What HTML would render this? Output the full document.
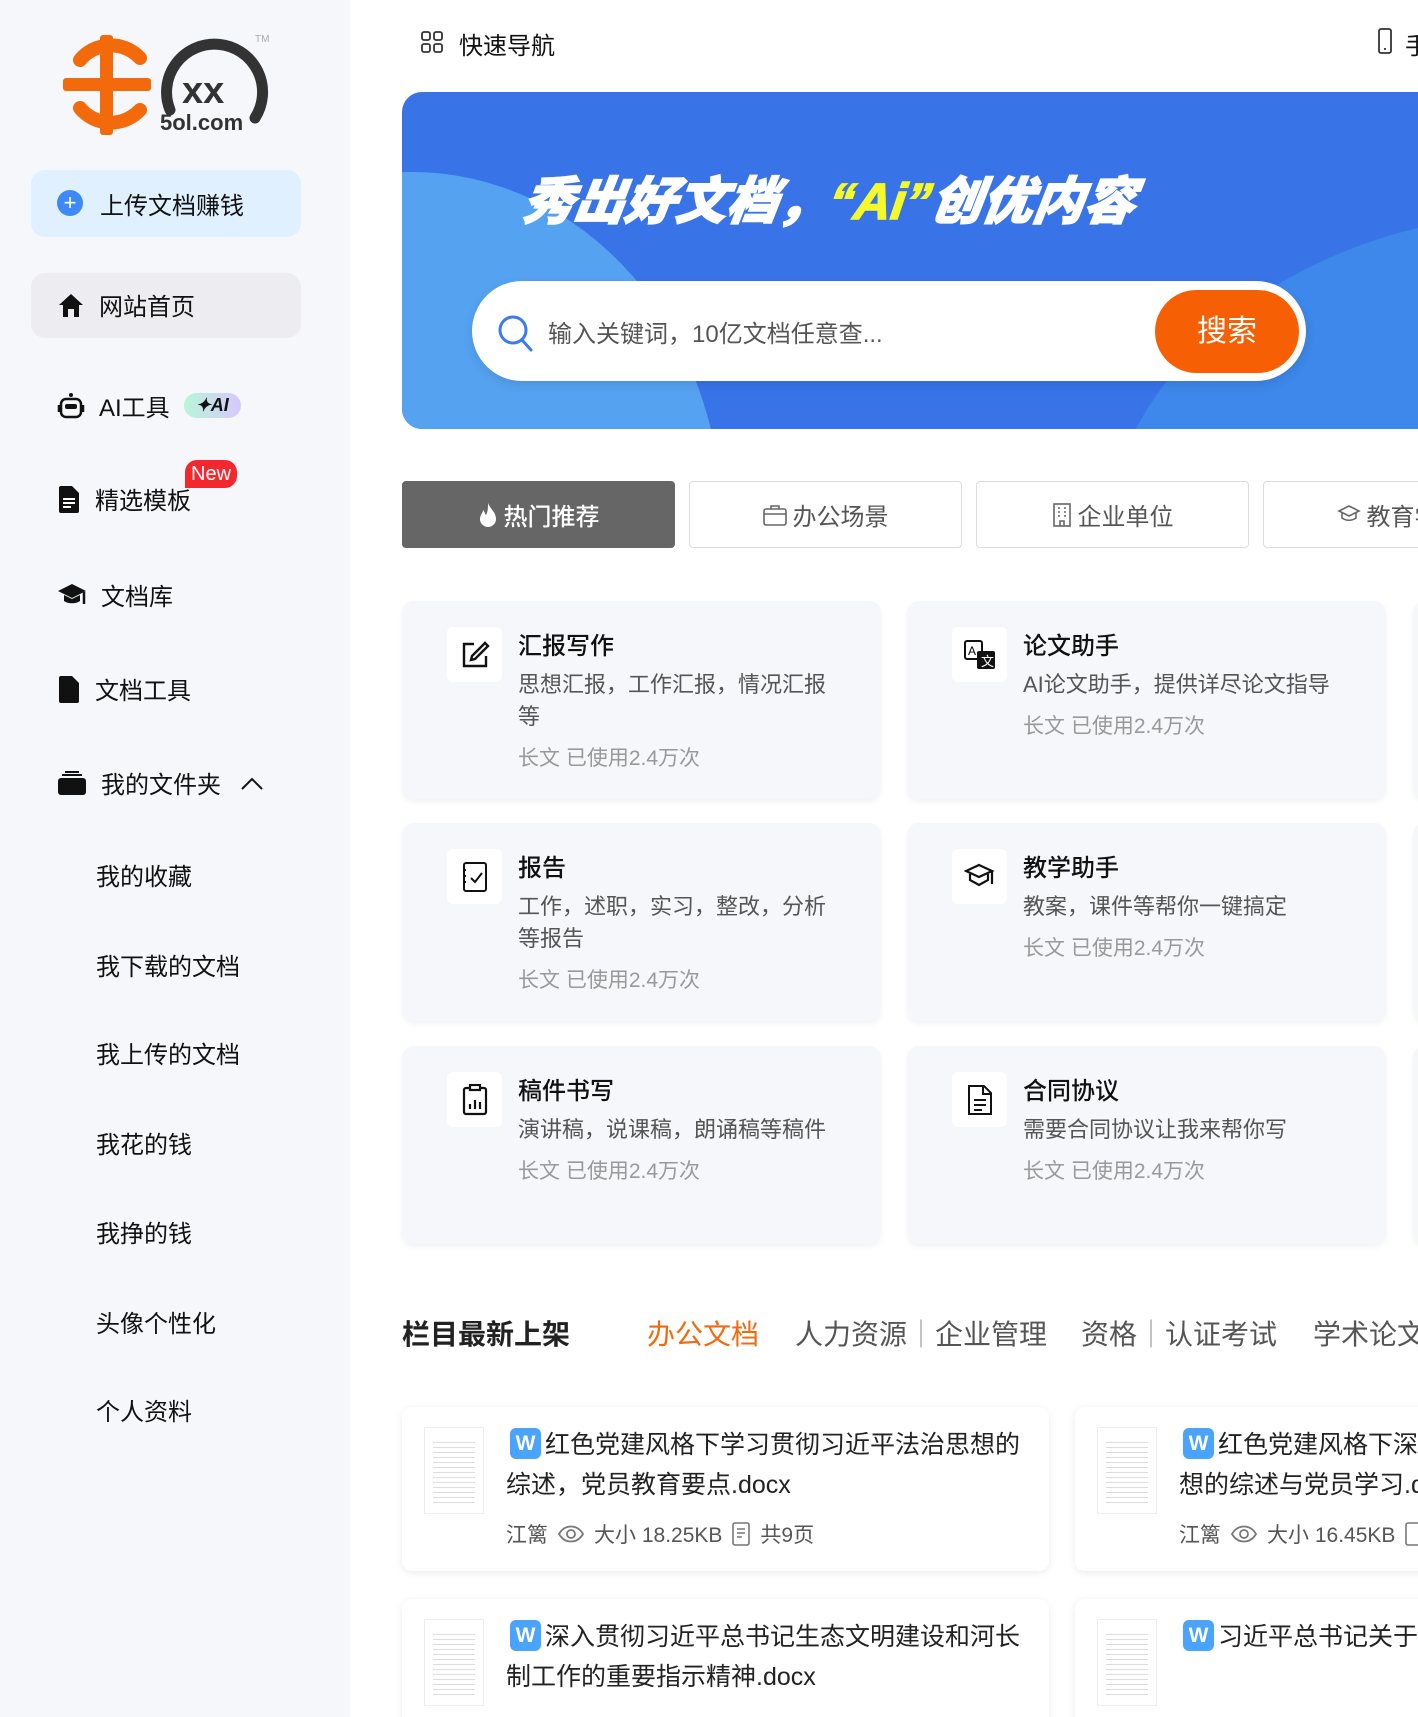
<!DOCTYPE html>
<html><head><meta charset="utf-8">
<style>
*{margin:0;padding:0;box-sizing:border-box}
html{overflow:hidden}
body{width:1418px;height:1717px;overflow:hidden;background:#fff;font-family:"Liberation Sans","Noto Sans CJK SC",sans-serif;color:#111;position:relative}
.a{position:absolute}
#side{left:0;top:0;width:350px;height:1717px;background:#f6f7fb}
.nav{position:absolute;left:57px;font-size:24px;display:flex;align-items:center;gap:14px;color:#111}
.sub{position:absolute;left:96px;font-size:24px;color:#111}
.tab{position:absolute;top:481px;height:67px;width:273px;border:1px solid #ddd;border-radius:4px;display:flex;align-items:center;justify-content:center;font-size:24px;color:#555;gap:6px;background:#fff}
.card{position:absolute;width:479px;height:198px;background:#f6f7fb;border-radius:12px;box-shadow:0 3px 6px rgba(0,0,0,.05)}
.card .ic{position:absolute;left:45px;top:26px;width:55px;height:55px;background:#fff;border-radius:6px;display:flex;align-items:center;justify-content:center}
.card h3{position:absolute;left:116px;top:25px;font-size:24px;font-weight:500;color:#111}
.card p{position:absolute;left:116px;top:68px;width:325px;font-size:22px;line-height:32px;color:#555}
.card .m{position:absolute;left:116px;font-size:21px;color:#999}
.doc{position:absolute;width:647px;height:164px;background:#fff;border-radius:10px;box-shadow:0 2px 8px rgba(0,0,0,.08)}
.doc .th{position:absolute;left:22px;top:20px;width:60px;height:87px;border:1px solid #eee;background:repeating-linear-gradient(#fff 0 4px,#ddd 4px 5px);background-clip:content-box;padding:10px 8px}
.doc .t{position:absolute;left:104px;top:18px;width:525px;font-size:25px;line-height:40px;color:#222}
.w{display:inline-block;width:31px;height:31px;background:#4aa3ff;border-radius:6px;color:#fff;font-size:21px;font-weight:bold;text-align:center;line-height:31px;vertical-align:3px;margin:0 4px 0 4px}
.doc .mm{position:absolute;left:104px;top:112px;font-size:21px;color:#555;display:flex;gap:10px;align-items:center}
</style></head><body>
<div id="side" class="a"></div>
<svg class="a" style="left:60px;top:30px" width="220" height="110" viewBox="0 0 220 110">
<path d="M20 30 A40 40 0 0 1 80 28" stroke="#f26a0c" stroke-width="14" fill="none" stroke-linecap="round"/>
<path d="M20 78 A40 40 0 0 0 80 80" stroke="#f26a0c" stroke-width="14" fill="none" stroke-linecap="round"/>
<rect x="3" y="48" width="88" height="13" rx="3" fill="#f26a0c"/>
<rect x="40" y="5" width="13" height="100" rx="3" fill="#f26a0c"/>
<path d="M110 80 A48 48 0 1 1 195 88" stroke="#333" stroke-width="11" fill="none" stroke-linecap="round"/>
<text x="122" y="73" font-size="38" font-weight="bold" fill="#333" font-family="Liberation Sans">xx</text>
<text x="100" y="100" font-size="22" font-weight="bold" fill="#333" font-family="Liberation Sans">5ol.com</text>
<text x="195" y="12" font-size="10" fill="#aaa" font-family="Liberation Sans">TM</text>
</svg>
<div class="a" style="left:31px;top:170px;width:270px;height:67px;background:#e0f0ff;border-radius:14px"></div>
<div class="a" style="left:57px;top:190px;width:26px;height:26px;border-radius:50%;background:#3d8af7;color:#fff;text-align:center;line-height:25px;font-size:22px">+</div>
<div class="a" style="left:100px;top:186px;font-size:24px">上传文档赚钱</div>
<div class="a" style="left:31px;top:273px;width:270px;height:65px;background:#edecf1;border-radius:14px"></div>
<div class="nav" style="top:287px"><svg width="28" height="26" viewBox="0 0 28 26"><path d="M14 2 L26 13 H22 V25 H17 V17 H11 V25 H6 V13 H2 Z" fill="#111"/></svg><span>网站首页</span></div>
<div class="nav" style="top:388px"><svg width="28" height="28" viewBox="0 0 28 28"><circle cx="14" cy="3" r="2" fill="#111"/><rect x="4" y="7" width="20" height="18" rx="5" fill="none" stroke="#111" stroke-width="2.5"/><rect x="8" y="12" width="12" height="5" rx="2" fill="#111"/><path d="M2 13v7M26 13v7" stroke="#111" stroke-width="2.5"/></svg><span>AI工具</span><span style="background:linear-gradient(90deg,#b8f5d8,#d7c8ff);border-radius:14px;font-size:18px;font-style:italic;font-weight:bold;padding:2px 12px">✦AI</span></div>
<div class="nav" style="top:481px"><svg width="24" height="28" viewBox="0 0 24 28"><path d="M2 3a2 2 0 0 1 2-2h11l7 7v18a2 2 0 0 1-2 2H4a2 2 0 0 1-2-2Z" fill="#111"/><path d="M6 14h12M6 18h12M6 22h8" stroke="#fff" stroke-width="2"/></svg><span>精选模板</span></div>
<div class="a" style="left:185px;top:460px;background:#f3282f;color:#fff;font-size:20px;padding:0 6px;border-radius:12px 12px 12px 0;line-height:28px">New</div>
<div class="nav" style="top:577px"><svg width="30" height="26" viewBox="0 0 30 26"><path d="M15 2 L29 9 L15 16 L1 9Z" fill="#111"/><path d="M7 13v6c4 3 12 3 16 0v-6l-8 4z" fill="#111"/><path d="M27 10v12" stroke="#111" stroke-width="2.5"/></svg><span>文档库</span></div>
<div class="nav" style="top:671px"><svg width="24" height="28" viewBox="0 0 24 28"><path d="M2 3a2 2 0 0 1 2-2h11l7 7v18a2 2 0 0 1-2 2H4a2 2 0 0 1-2-2Z" fill="#111"/></svg><span>文档工具</span></div>
<div class="nav" style="top:765px"><svg width="30" height="26" viewBox="0 0 30 26"><rect x="1" y="8" width="28" height="17" rx="3" fill="#111"/><path d="M5 5h20M8 2h14" stroke="#111" stroke-width="2"/></svg><span>我的文件夹</span><svg width="26" height="18" viewBox="0 0 26 18" style="margin-left:4px"><path d="M3 15 L13 5 L23 15" stroke="#111" stroke-width="2" fill="none"/></svg></div>
<div class="sub" style="top:857px">我的收藏</div>
<div class="sub" style="top:947px">我下载的文档</div>
<div class="sub" style="top:1035px">我上传的文档</div>
<div class="sub" style="top:1125px">我花的钱</div>
<div class="sub" style="top:1214px">我挣的钱</div>
<div class="sub" style="top:1304px">头像个性化</div>
<div class="sub" style="top:1392px">个人资料</div>

<svg class="a" style="left:420px;top:30px" width="24" height="24" viewBox="0 0 24 24" fill="none" stroke="#333" stroke-width="1.8"><rect x="2" y="2" width="8" height="8" rx="2"/><rect x="14" y="2" width="8" height="8" rx="2"/><rect x="2" y="14" width="8" height="8" rx="2"/><rect x="14" y="14" width="8" height="8" rx="2"/></svg>
<div class="a" style="left:459px;top:26px;font-size:24px">快速导航</div>
<svg class="a" style="left:1377px;top:28px" width="16" height="26" viewBox="0 0 16 26" fill="none" stroke="#333" stroke-width="1.8"><rect x="2" y="1" width="12" height="24" rx="2"/><path d="M7 21h2"/></svg>
<div class="a" style="left:1405px;top:26px;font-size:24px">手</div>

<div class="a" style="left:402px;top:92px;width:1100px;height:337px;border-radius:20px 0 0 20px;overflow:hidden;background:#3873e8">
<div class="a" style="left:-300px;top:80px;width:620px;height:700px;border-radius:50%;background:#55a2f1"></div>
<div class="a" style="left:700px;top:120px;width:900px;height:700px;border-radius:50%;background:#3d88ea"></div>
<div class="a" style="left:122px;top:68px;font-size:51px;font-weight:900;font-style:italic;color:#fff;transform:skewX(-8deg);-webkit-text-stroke:1.5px #fff">秀出好文档，<span style="color:#f5f92a;-webkit-text-stroke:1.5px #f5f92a">“Ai”</span>创优内容</div>
<div class="a" style="left:70px;top:189px;width:834px;height:100px;background:#fff;border-radius:50px;box-shadow:0 4px 10px rgba(0,0,0,.1)"></div>
<svg class="a" style="left:95px;top:222px" width="38" height="40" viewBox="0 0 38 40" fill="none" stroke="#3b7bf1" stroke-width="3"><circle cx="16" cy="16" r="13"/><path d="M26 27l8 9" stroke-linecap="round"/></svg>
<div class="a" style="left:146px;top:222px;font-size:24px;color:#555">输入关键词，10亿文档任意查...</div>
<div class="a" style="left:753px;top:198px;width:144px;height:83px;background:#f65f04;border-radius:42px;color:#fff;font-size:30px;text-align:center;line-height:83px">搜索</div>
</div>

<div class="tab" style="left:402px;background:#666;color:#fff;border-color:#666;font-weight:500"><svg width="20" height="26" viewBox="0 0 20 26"><path d="M10 1c2 6 8 9 8 16a8 8 0 0 1-16 0c0-4 3-6 3-9 2 2 2 4 3 5 2-3 2-8 2-12z" fill="#fff"/></svg>热门推荐</div>
<div class="tab" style="left:689px"><svg width="24" height="22" viewBox="0 0 24 22" fill="none" stroke="#666" stroke-width="1.6"><rect x="1" y="5" width="22" height="16" rx="2"/><path d="M8 5V2h8v3M1 10h22"/></svg>办公场景</div>
<div class="tab" style="left:976px"><svg width="20" height="24" viewBox="0 0 20 24" fill="none" stroke="#666" stroke-width="1.6"><rect x="2" y="1" width="16" height="22"/><path d="M6 5h2M12 5h2M6 9h2M12 9h2M6 13h2M12 13h2M8 23v-5h4v5"/></svg>企业单位</div>
<div class="tab" style="left:1263px"><svg width="24" height="22" viewBox="0 0 24 22" fill="none" stroke="#666" stroke-width="1.6"><path d="M12 2l10 5-10 5-10-5z M5 9v5c4 3 10 3 14 0V9"/></svg>教育学习</div>

<div class="card" style="left:402px;top:601px"><div class="ic"><svg width="30" height="30" viewBox="0 0 30 30" fill="none" stroke="#111" stroke-width="2.4"><path d="M14 4H4v22h22V16"/><path d="M25 3l3 3-13 13-4 1 1-4z"/></svg></div><h3>汇报写作</h3><p>思想汇报，工作汇报，情况汇报等</p><div class="m" style="top:141px">长文 已使用2.4万次</div></div>
<div class="card" style="left:907px;top:601px"><div class="ic"><svg width="34" height="32" viewBox="0 0 34 32"><rect x="2" y="2" width="17" height="18" rx="2" fill="#fff" stroke="#111" stroke-width="2"/><text x="5" y="16" font-size="12" font-family="Liberation Sans">A</text><rect x="14" y="12" width="18" height="18" rx="2" fill="#111"/><text x="18" y="27" font-size="13" fill="#fff" font-family="Liberation Sans">文</text></svg></div><h3>论文助手</h3><p>AI论文助手，提供详尽论文指导</p><div class="m" style="top:109px">长文 已使用2.4万次</div></div>
<div class="card" style="left:1413px;top:601px"></div>
<div class="card" style="left:402px;top:823px"><div class="ic"><svg width="28" height="32" viewBox="0 0 28 32" fill="none" stroke="#111" stroke-width="2"><rect x="3" y="2" width="22" height="28" rx="2"/><path d="M10 17l4 4 7-9M2 9h3M2 15h3M2 21h3" /></svg></div><h3>报告</h3><p>工作，述职，实习，整改，分析等报告</p><div class="m" style="top:141px">长文 已使用2.4万次</div></div>
<div class="card" style="left:907px;top:823px"><div class="ic"><svg width="32" height="30" viewBox="0 0 32 30" fill="none" stroke="#111" stroke-width="2.2"><path d="M15 3l13 6-13 6-13-6z M6 12v6l9 5 9-5v-6M28 9v13"/></svg></div><h3>教学助手</h3><p>教案，课件等帮你一键搞定</p><div class="m" style="top:109px">长文 已使用2.4万次</div></div>
<div class="card" style="left:1413px;top:823px"></div>
<div class="card" style="left:402px;top:1046px"><div class="ic"><svg width="28" height="32" viewBox="0 0 28 32" fill="none" stroke="#111" stroke-width="2.2"><rect x="3" y="4" width="22" height="26" rx="2"/><rect x="9" y="1" width="10" height="5" fill="#fff"/><path d="M9 25v-5M14 25v-9M19 25v-7"/></svg></div><h3>稿件书写</h3><p>演讲稿，说课稿，朗诵稿等稿件</p><div class="m" style="top:109px">长文 已使用2.4万次</div></div>
<div class="card" style="left:907px;top:1046px"><div class="ic"><svg width="26" height="32" viewBox="0 0 26 32" fill="none" stroke="#111" stroke-width="2"><path d="M2 2h15l7 7v21H2z M16 2v8h8 M7 16h12M7 21h12M7 26h8"/></svg></div><h3>合同协议</h3><p>需要合同协议让我来帮你写</p><div class="m" style="top:109px">长文 已使用2.4万次</div></div>
<div class="card" style="left:1413px;top:1046px"></div>

<div class="a" style="left:402px;top:1313px;font-size:28px;font-weight:bold;color:#222">栏目最新上架</div>
<div class="a" style="left:647px;top:1313px;font-size:28px;color:#f26a0c">办公文档</div>
<div class="a" style="left:795px;top:1313px;font-size:28px;color:#555;white-space:nowrap">人力资源<span style="color:#999">｜</span>企业管理</div>
<div class="a" style="left:1081px;top:1313px;font-size:28px;color:#555;white-space:nowrap">资格<span style="color:#999">｜</span>认证考试</div>
<div class="a" style="left:1313px;top:1313px;font-size:28px;color:#555;white-space:nowrap">学术论文</div>

<div class="doc" style="left:402px;top:1407px"><div class="th"></div><div class="t"><span class="w">W</span>红色党建风格下学习贯彻习近平法治思想的综述，党员教育要点.docx</div><div class="mm">江篱 <svg width="26" height="18" viewBox="0 0 26 18" fill="none" stroke="#777" stroke-width="1.8"><path d="M1 9c6-10 18-10 24 0-6 10-18 10-24 0z"/><circle cx="13" cy="9" r="4"/></svg>大小 18.25KB <svg width="18" height="24" viewBox="0 0 18 24" fill="none" stroke="#777" stroke-width="1.6"><rect x="1" y="1" width="16" height="22" rx="2"/><path d="M5 7h8M5 11h8M5 15h5"/></svg>共9页</div></div>
<div class="doc" style="left:1075px;top:1407px"><div class="th"></div><div class="t" style="white-space:nowrap"><span class="w">W</span>红色党建风格下深入学习贯彻<br>想的综述与党员学习.docx</div><div class="mm">江篱 <svg width="26" height="18" viewBox="0 0 26 18" fill="none" stroke="#777" stroke-width="1.8"><path d="M1 9c6-10 18-10 24 0-6 10-18 10-24 0z"/><circle cx="13" cy="9" r="4"/></svg>大小 16.45KB <svg width="18" height="24" viewBox="0 0 18 24" fill="none" stroke="#777" stroke-width="1.6"><rect x="1" y="1" width="16" height="22" rx="2"/></svg></div></div>
<div class="doc" style="left:402px;top:1599px"><div class="th"></div><div class="t"><span class="w">W</span>深入贯彻习近平总书记生态文明建设和河长制工作的重要指示精神.docx</div></div>
<div class="doc" style="left:1075px;top:1599px"><div class="th"></div><div class="t" style="white-space:nowrap"><span class="w">W</span>习近平总书记关于</div></div>
</body></html>
